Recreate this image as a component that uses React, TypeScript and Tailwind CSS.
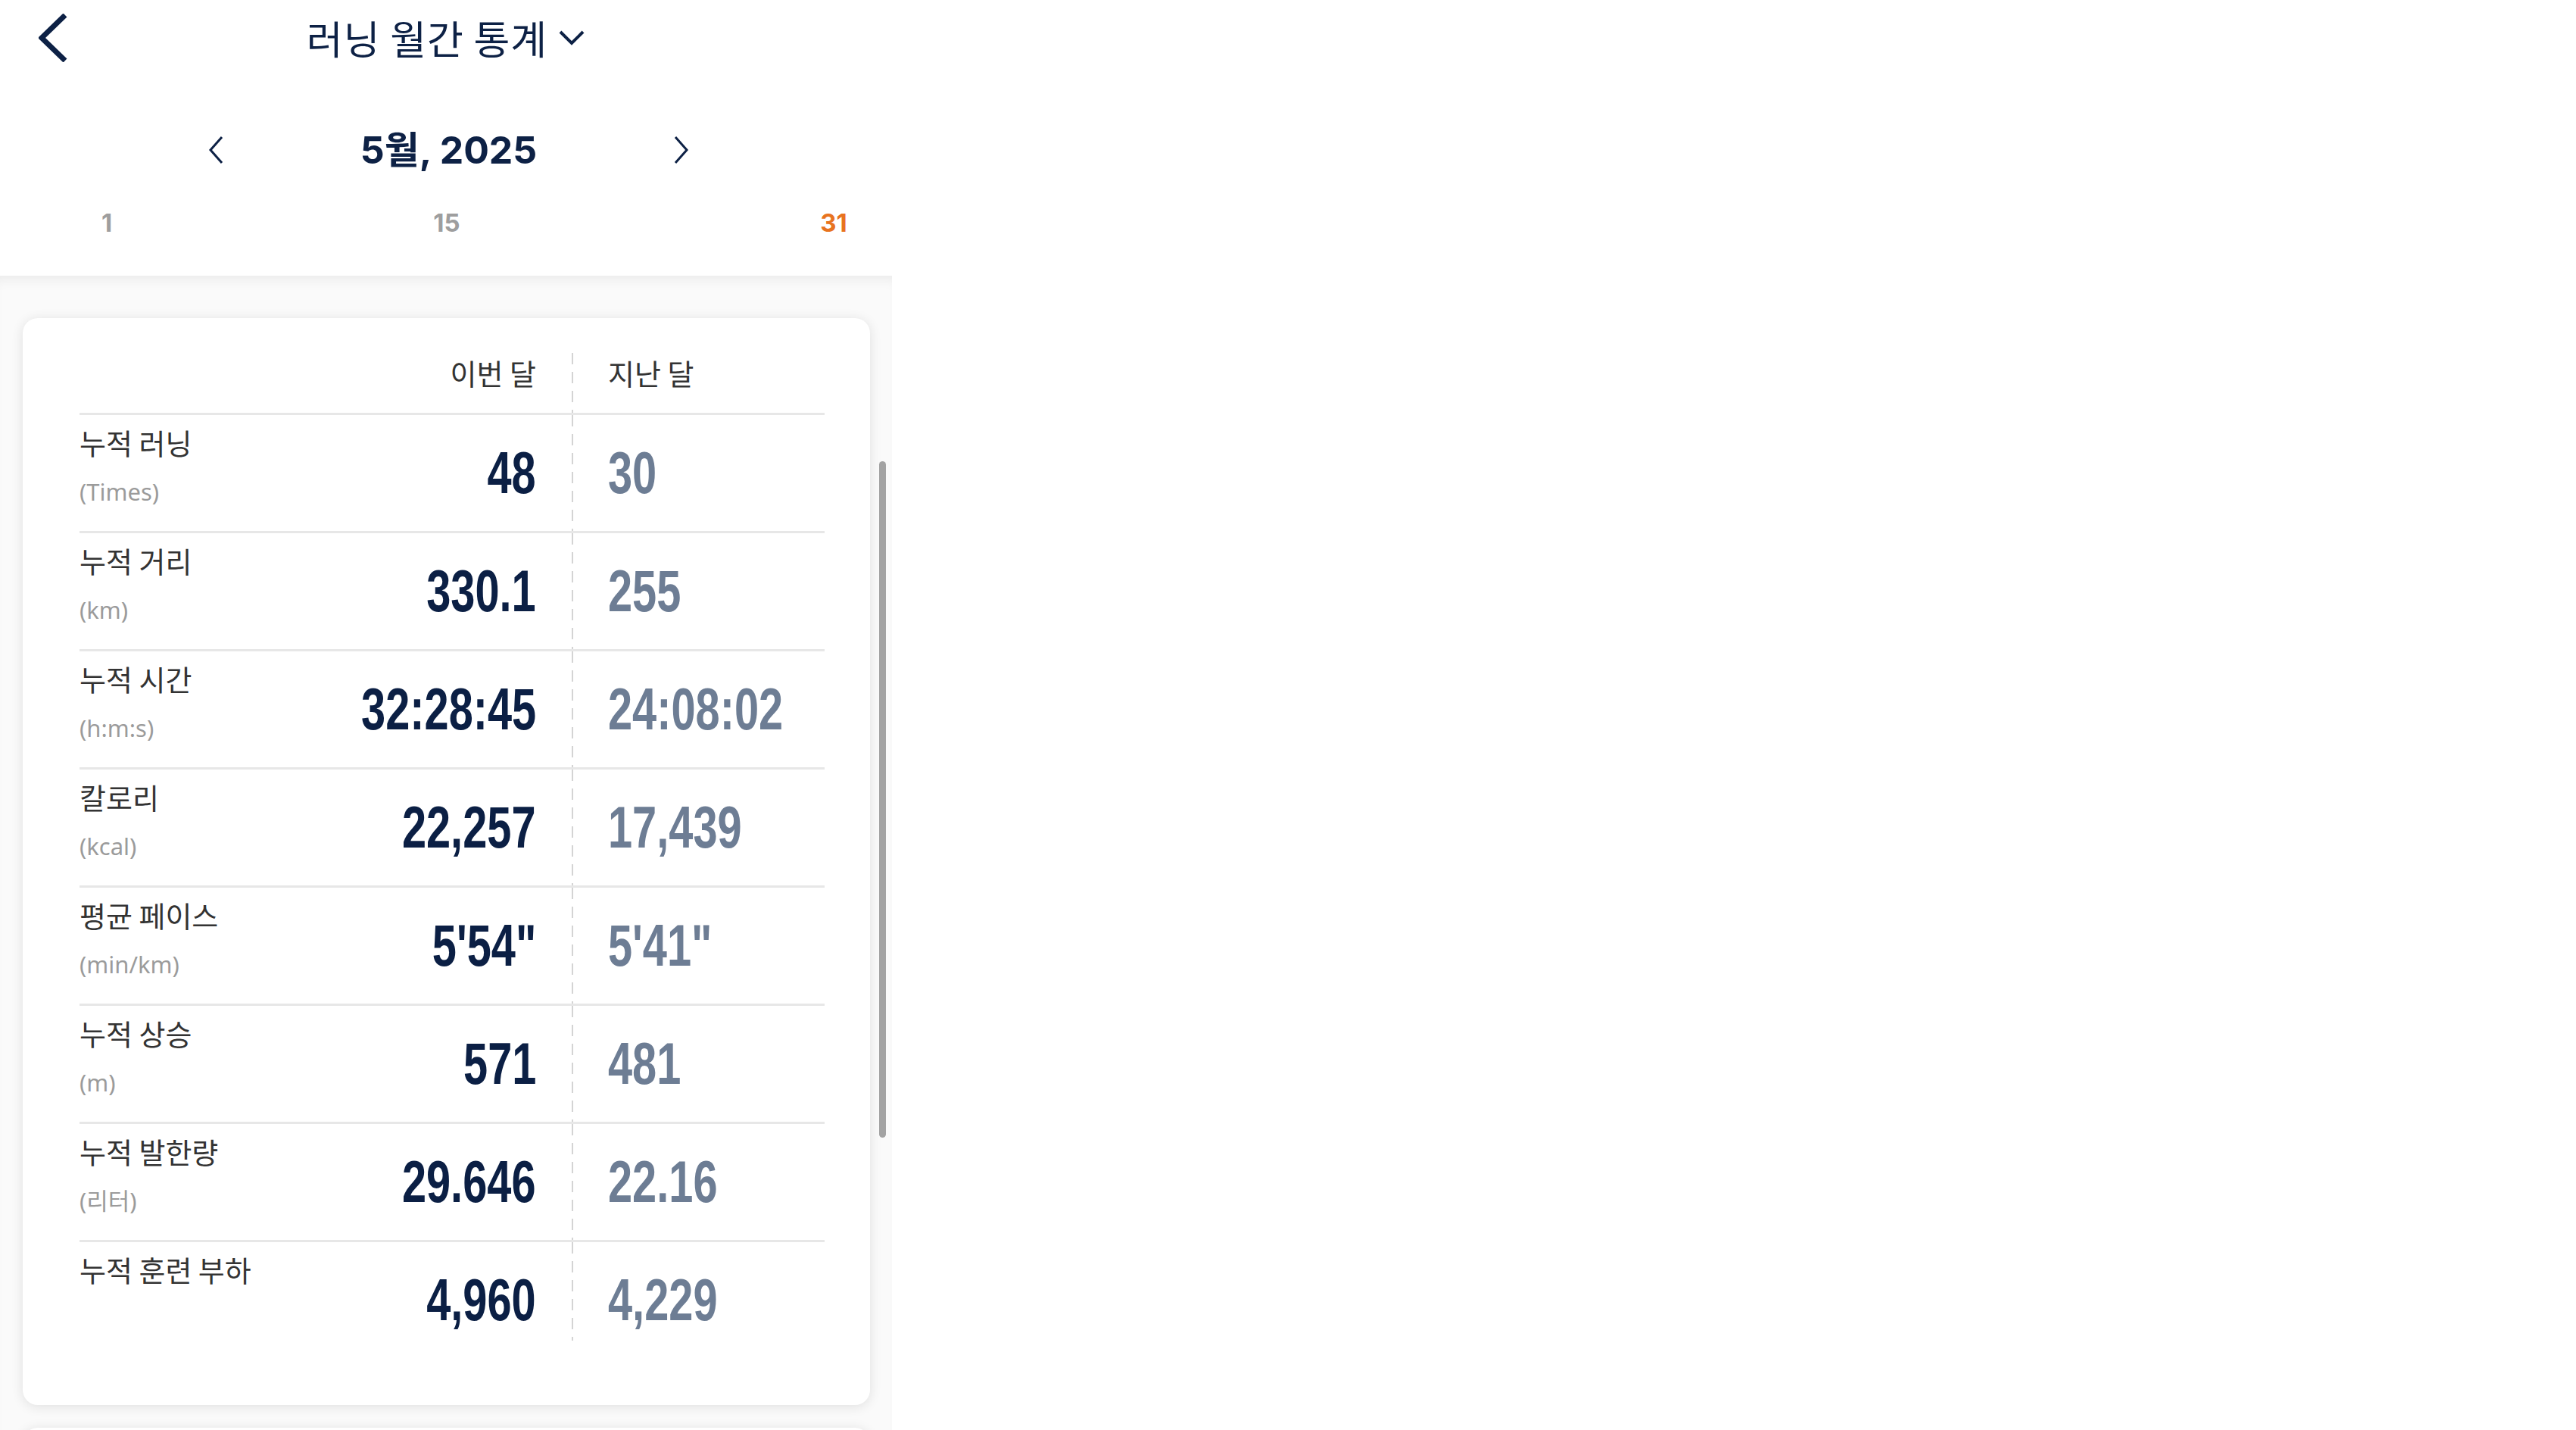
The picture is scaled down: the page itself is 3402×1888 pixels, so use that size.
const rows = [
  { label: "누적 러닝", unit: "(Times)", cur: "48", prev: "30" },
  { label: "누적 거리", unit: "(km)", cur: "330.1", prev: "255" },
  { label: "누적 시간", unit: "(h:m:s)", cur: "32:28:45", prev: "24:08:02" },
  { label: "칼로리", unit: "(kcal)", cur: "22,257", prev: "17,439" },
  { label: "평균 페이스", unit: "(min/km)", cur: "5'54\"", prev: "5'41\"" },
  { label: "누적 상승", unit: "(m)", cur: "571", prev: "481" },
  { label: "누적 발한량", unit: "(리터)", cur: "29.646", prev: "22.16" },
  { label: "누적 훈련 부하", unit: "", cur: "4,960", prev: "4,229" },
];

const dash =
  "w-[2px] bg-[repeating-linear-gradient(to_bottom,#d4d4d4_0px,#d4d4d4_15px,transparent_15px,transparent_25px)]";

// condensed look for the stat numbers (no narrow face installed)
const num =
  "inline-block text-[77px] leading-none font-bold scale-x-[0.75] font-['Liberation_Sans',sans-serif]";

const App = () => {
  return (
    <div className="h-[1888px] overflow-hidden bg-white font-['Noto_Sans_CJK_KR',sans-serif]">
      <main className="w-[1178px] flex flex-col">
        {/* Top bar */}
        <header className="h-[100px] grid grid-cols-[1fr_auto_1fr] items-center">
          <div className="pl-[51px]">
            <svg width="38" height="64" viewBox="0 0 38 64" fill="none">
              <path d="M35 2 L4 32 L35 62" stroke="#0d2145" strokeWidth="7" />
            </svg>
          </div>
          <div className="flex items-center gap-[14px]">
            <h1 className="text-[52px] leading-none text-[#0d2145] tracking-[1px]">
              러닝 월간 통계
            </h1>
            <svg width="36" height="22" viewBox="0 0 36 22" fill="none">
              <path d="M3 3 L18 18 L33 3" stroke="#0d2145" strokeWidth="4" />
            </svg>
          </div>
          <div />
        </header>

        {/* Month selector */}
        <div className="mt-[60px] h-[76px] flex items-center">
          <svg className="ml-[275px]" width="20" height="38" viewBox="0 0 20 38" fill="none">
            <path d="M18 2 L3 19 L18 36" stroke="#0d2145" strokeWidth="3" />
          </svg>
          <div className="w-[595px] text-center text-[50px] font-bold leading-none text-[#0d2145] font-['Inter','Noto_Sans_CJK_KR',sans-serif]">
            5월, 2025
          </div>
          <svg width="20" height="38" viewBox="0 0 20 38" fill="none">
            <path d="M2 2 L17 19 L2 36" stroke="#0d2145" strokeWidth="3" />
          </svg>
        </div>

        {/* Day axis */}
        <div className="mt-[39px] h-[40px] flex items-center text-[33px] font-bold font-['Inter',sans-serif]">
          <span className="ml-[116px] w-[50px] text-center text-[#9e9e9e]">1</span>
          <span className="ml-[399px] w-[50px] text-center text-[#9e9e9e]">15</span>
          <span className="ml-[461px] w-[50px] text-center text-[#e8731f]">31</span>
        </div>

        {/* Stats */}
        <section className="mt-[49px] bg-[#fafafa] shadow-[inset_0_14px_16px_-10px_rgba(0,0,0,0.07)] pt-[56px] flex items-start">
          <div className="flex flex-col">
            <div className="ml-[30px] w-[1119px] rounded-[20px] bg-white shadow-[0_2px_16px_rgba(0,0,0,0.11)] pt-[46px] pb-[62px] pl-[75px] pr-[60px]">
              <div className="grid grid-cols-[603px_95px_286px] h-[79px] text-[38px] leading-[46px] text-[#333333]">
                <div className="pt-[3px] text-right">이번 달</div>
                <div className="flex justify-center">
                  <div className={dash + " h-full"} />
                </div>
                <div className="pt-[3px]">지난 달</div>
              </div>
              {rows.map((r, i) => (
                <div
                  key={r.label}
                  className="grid grid-cols-[603px_95px_286px] h-[156px] border-t-[3px] border-[#e7e7e7]"
                >
                  <div className="flex justify-between">
                    <div className="pt-[13px] flex flex-col">
                      <span className="text-[38px] leading-[46px] text-[#333333]">{r.label}</span>
                      {r.unit && (
                        <span className="mt-[24px] text-[31px] leading-[36px] text-[#9b9b9b] font-['Noto_Sans','Noto_Sans_CJK_KR',sans-serif]">
                          {r.unit}
                        </span>
                      )}
                    </div>
                    <span className={num + " self-center origin-right text-[#0b1f44]"}>{r.cur}</span>
                  </div>
                  <div className="flex justify-center">
                    <div className={dash + (i === rows.length - 1 ? " h-[130px]" : " h-full")} />
                  </div>
                  <div className="flex items-center">
                    <span className={num + " origin-left text-[#6d7d94]"}>{r.prev}</span>
                  </div>
                </div>
              ))}
            </div>
            <div className="ml-[30px] mt-[30px] w-[1119px] h-[400px] rounded-[20px] bg-white shadow-[0_2px_16px_rgba(0,0,0,0.11)]" />
          </div>
          <div className="ml-[12px] mt-[189px] w-[9px] h-[893px] rounded-full bg-[#a3a3a3]" />
        </section>
      </main>
    </div>
  );
};

export default App;
